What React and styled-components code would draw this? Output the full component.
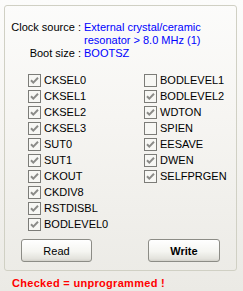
import React from 'react';
import styled, { createGlobalStyle } from 'styled-components';

const GlobalStyle = createGlobalStyle`
  html, body {
    margin: 0;
    padding: 0;
  }
  body {
    width: 243px;
    height: 291px;
    overflow: hidden;
    background: linear-gradient(#fcfcfb, #f6f5f2 40%, #ebeae5);
    font-family: "Liberation Sans", Arial, sans-serif;
    font-size: 11px;
    color: #000;
  }
`;

const Page = styled.div`
  padding: 5px 0 0 4px;
`;

const Panel = styled.div`
  box-sizing: border-box;
  width: 233px;
  height: 266px;
  border: 1px solid #d0d0c4;
  border-radius: 3px;
  padding: 15px 0 0 0;
  display: flex;
  flex-direction: column;
`;

const Info = styled.div`
  display: grid;
  grid-template-columns: 76px 1fr;
  column-gap: 3px;
  line-height: 13px;
`;

const InfoLabel = styled.div`
  text-align: right;
  white-space: nowrap;
`;

const InfoValue = styled.div`
  color: #0000ff;
  white-space: nowrap;
`;

const Fuses = styled.div`
  display: grid;
  grid-template-columns: 116px 1fr;
  padding-left: 23px;
  margin-top: 12px;
`;

const Column = styled.div`
  display: flex;
  flex-direction: column;
`;

const FuseRow = styled.label`
  display: flex;
  align-items: center;
  height: 16px;
  gap: 3px;
  white-space: nowrap;
`;

const Buttons = styled.div`
  display: flex;
  padding-left: 16px;
  gap: 56px;
  margin-top: 7px;
`;

const Button = styled.button`
  box-sizing: border-box;
  width: ${p => p.$w}px;
  height: 23px;
  border: 1px solid #8c8c86;
  border-radius: 3px;
  background: linear-gradient(#ffffff, #f5f5f1 55%, #e3e2dc 90%, #d2d1ca);
  font-family: "Liberation Sans", Arial, sans-serif;
  font-size: 11px;
  font-weight: ${p => (p.$bold ? 700 : 400)};
  color: #000;
  padding: 0;
`;

const Note = styled.div`
  margin: 6px 0 0 8px;
  color: #ff0000;
  font-weight: 700;
  letter-spacing: 0.3px;
  line-height: 13px;
`;

function Check({ on }) {
  return (
    <svg width="13" height="13" viewBox="0 0 13 13">
      <rect x="0.5" y="0.5" width="12" height="12" fill="#f7f7f4" stroke="#7c7c78" />
      {on && (
        <path d="M3 6.2 L5.3 8.6 L10 3.8" fill="none" stroke="#8b8b88" strokeWidth="2" />
      )}
    </svg>
  );
}

const left = [
  ['CKSEL0', true], ['CKSEL1', true], ['CKSEL2', true], ['CKSEL3', true],
  ['SUT0', true], ['SUT1', true], ['CKOUT', true], ['CKDIV8', true],
  ['RSTDISBL', true], ['BODLEVEL0', true],
];

const right = [
  ['BODLEVEL1', false], ['BODLEVEL2', true], ['WDTON', true], ['SPIEN', false],
  ['EESAVE', true], ['DWEN', true], ['SELFPRGEN', true],
];

export default function App() {
  return (
    <Page>
      <GlobalStyle />
      <Panel>
        <Info>
          <InfoLabel>Clock source :</InfoLabel>
          <InfoValue>External crystal/ceramic</InfoValue>
          <InfoLabel />
          <InfoValue>resonator &gt; 8.0 MHz (1)</InfoValue>
          <InfoLabel>Boot size :</InfoLabel>
          <InfoValue>BOOTSZ</InfoValue>
        </Info>
        <Fuses>
          <Column>
            {left.map(([name, on]) => (
              <FuseRow key={name}><Check on={on} />{name}</FuseRow>
            ))}
          </Column>
          <Column>
            {right.map(([name, on]) => (
              <FuseRow key={name}><Check on={on} />{name}</FuseRow>
            ))}
          </Column>
        </Fuses>
        <Buttons>
          <Button $w={71}>Read</Button>
          <Button $w={72} $bold>Write</Button>
        </Buttons>
      </Panel>
      <Note>Checked = unprogrammed !</Note>
    </Page>
  );
}
